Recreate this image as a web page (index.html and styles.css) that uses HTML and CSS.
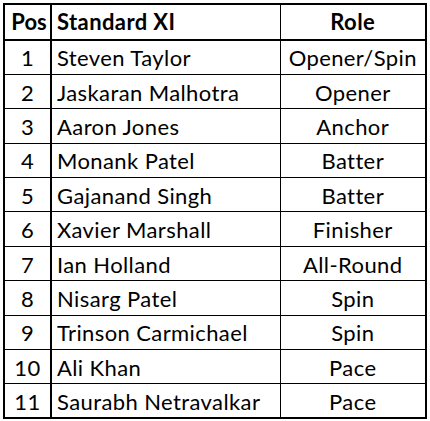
FILE: index.html
```html
<!DOCTYPE html>
<html>
<head>
<meta charset="utf-8">
<link rel="stylesheet" href="styles.css">
</head>
<body>
<table class="xi">
  <colgroup><col class="c-pos"><col class="c-name"><col class="c-role"></colgroup>
  <thead>
    <tr><th class="pos">Pos</th><th class="name">Standard XI</th><th class="role">Role</th></tr>
  </thead>
  <tbody>
    <tr><td class="pos">1</td><td class="name">Steven Taylor</td><td class="role">Opener/Spin</td></tr>
    <tr><td class="pos">2</td><td class="name">Jaskaran Malhotra</td><td class="role">Opener</td></tr>
    <tr><td class="pos">3</td><td class="name">Aaron Jones</td><td class="role">Anchor</td></tr>
    <tr><td class="pos">4</td><td class="name">Monank Patel</td><td class="role">Batter</td></tr>
    <tr><td class="pos">5</td><td class="name">Gajanand Singh</td><td class="role">Batter</td></tr>
    <tr><td class="pos">6</td><td class="name">Xavier Marshall</td><td class="role">Finisher</td></tr>
    <tr><td class="pos">7</td><td class="name">Ian Holland</td><td class="role">All-Round</td></tr>
    <tr><td class="pos">8</td><td class="name">Nisarg Patel</td><td class="role">Spin</td></tr>
    <tr><td class="pos">9</td><td class="name">Trinson Carmichael</td><td class="role">Spin</td></tr>
    <tr><td class="pos">10</td><td class="name">Ali Khan</td><td class="role">Pace</td></tr>
    <tr><td class="pos">11</td><td class="name">Saurabh Netravalkar</td><td class="role">Pace</td></tr>
  </tbody>
</table>
</body>
</html>
```
FILE: styles.css
```css
html, body {
  margin: 0;
  padding: 0;
  background: #fff;
}
body {
  padding: 3px;
  font-family: "Lato", "Open Sans", sans-serif;
  font-size: 22px;
  letter-spacing: 0.4px;
  color: #000;
}
.xi {
  border-collapse: collapse;
  width: 424px;
  border: 2px solid #000;
  table-layout: fixed;
}
.c-pos { width: 47px; }
.c-name { width: 229px; }
.xi th, .xi td {
  border: 1px solid #000;
  height: 34.4px;
  padding: 2px 0 0 5px;
  vertical-align: middle;
  line-height: 1;
  box-sizing: border-box;
  white-space: nowrap;
}
.xi th {
  height: 36px;
  padding-top: 0;
  font-weight: bold;
  border-bottom: 2px solid #000;
}
.xi .pos {
  text-align: center;
  padding-left: 0;
  border-right: 2px solid #000;
}
.xi th.pos {
  padding-left: 3px;
  letter-spacing: 0;
}
.xi .name {
  text-align: left;
}
.xi .role {
  text-align: center;
  padding-left: 0;
}
```
